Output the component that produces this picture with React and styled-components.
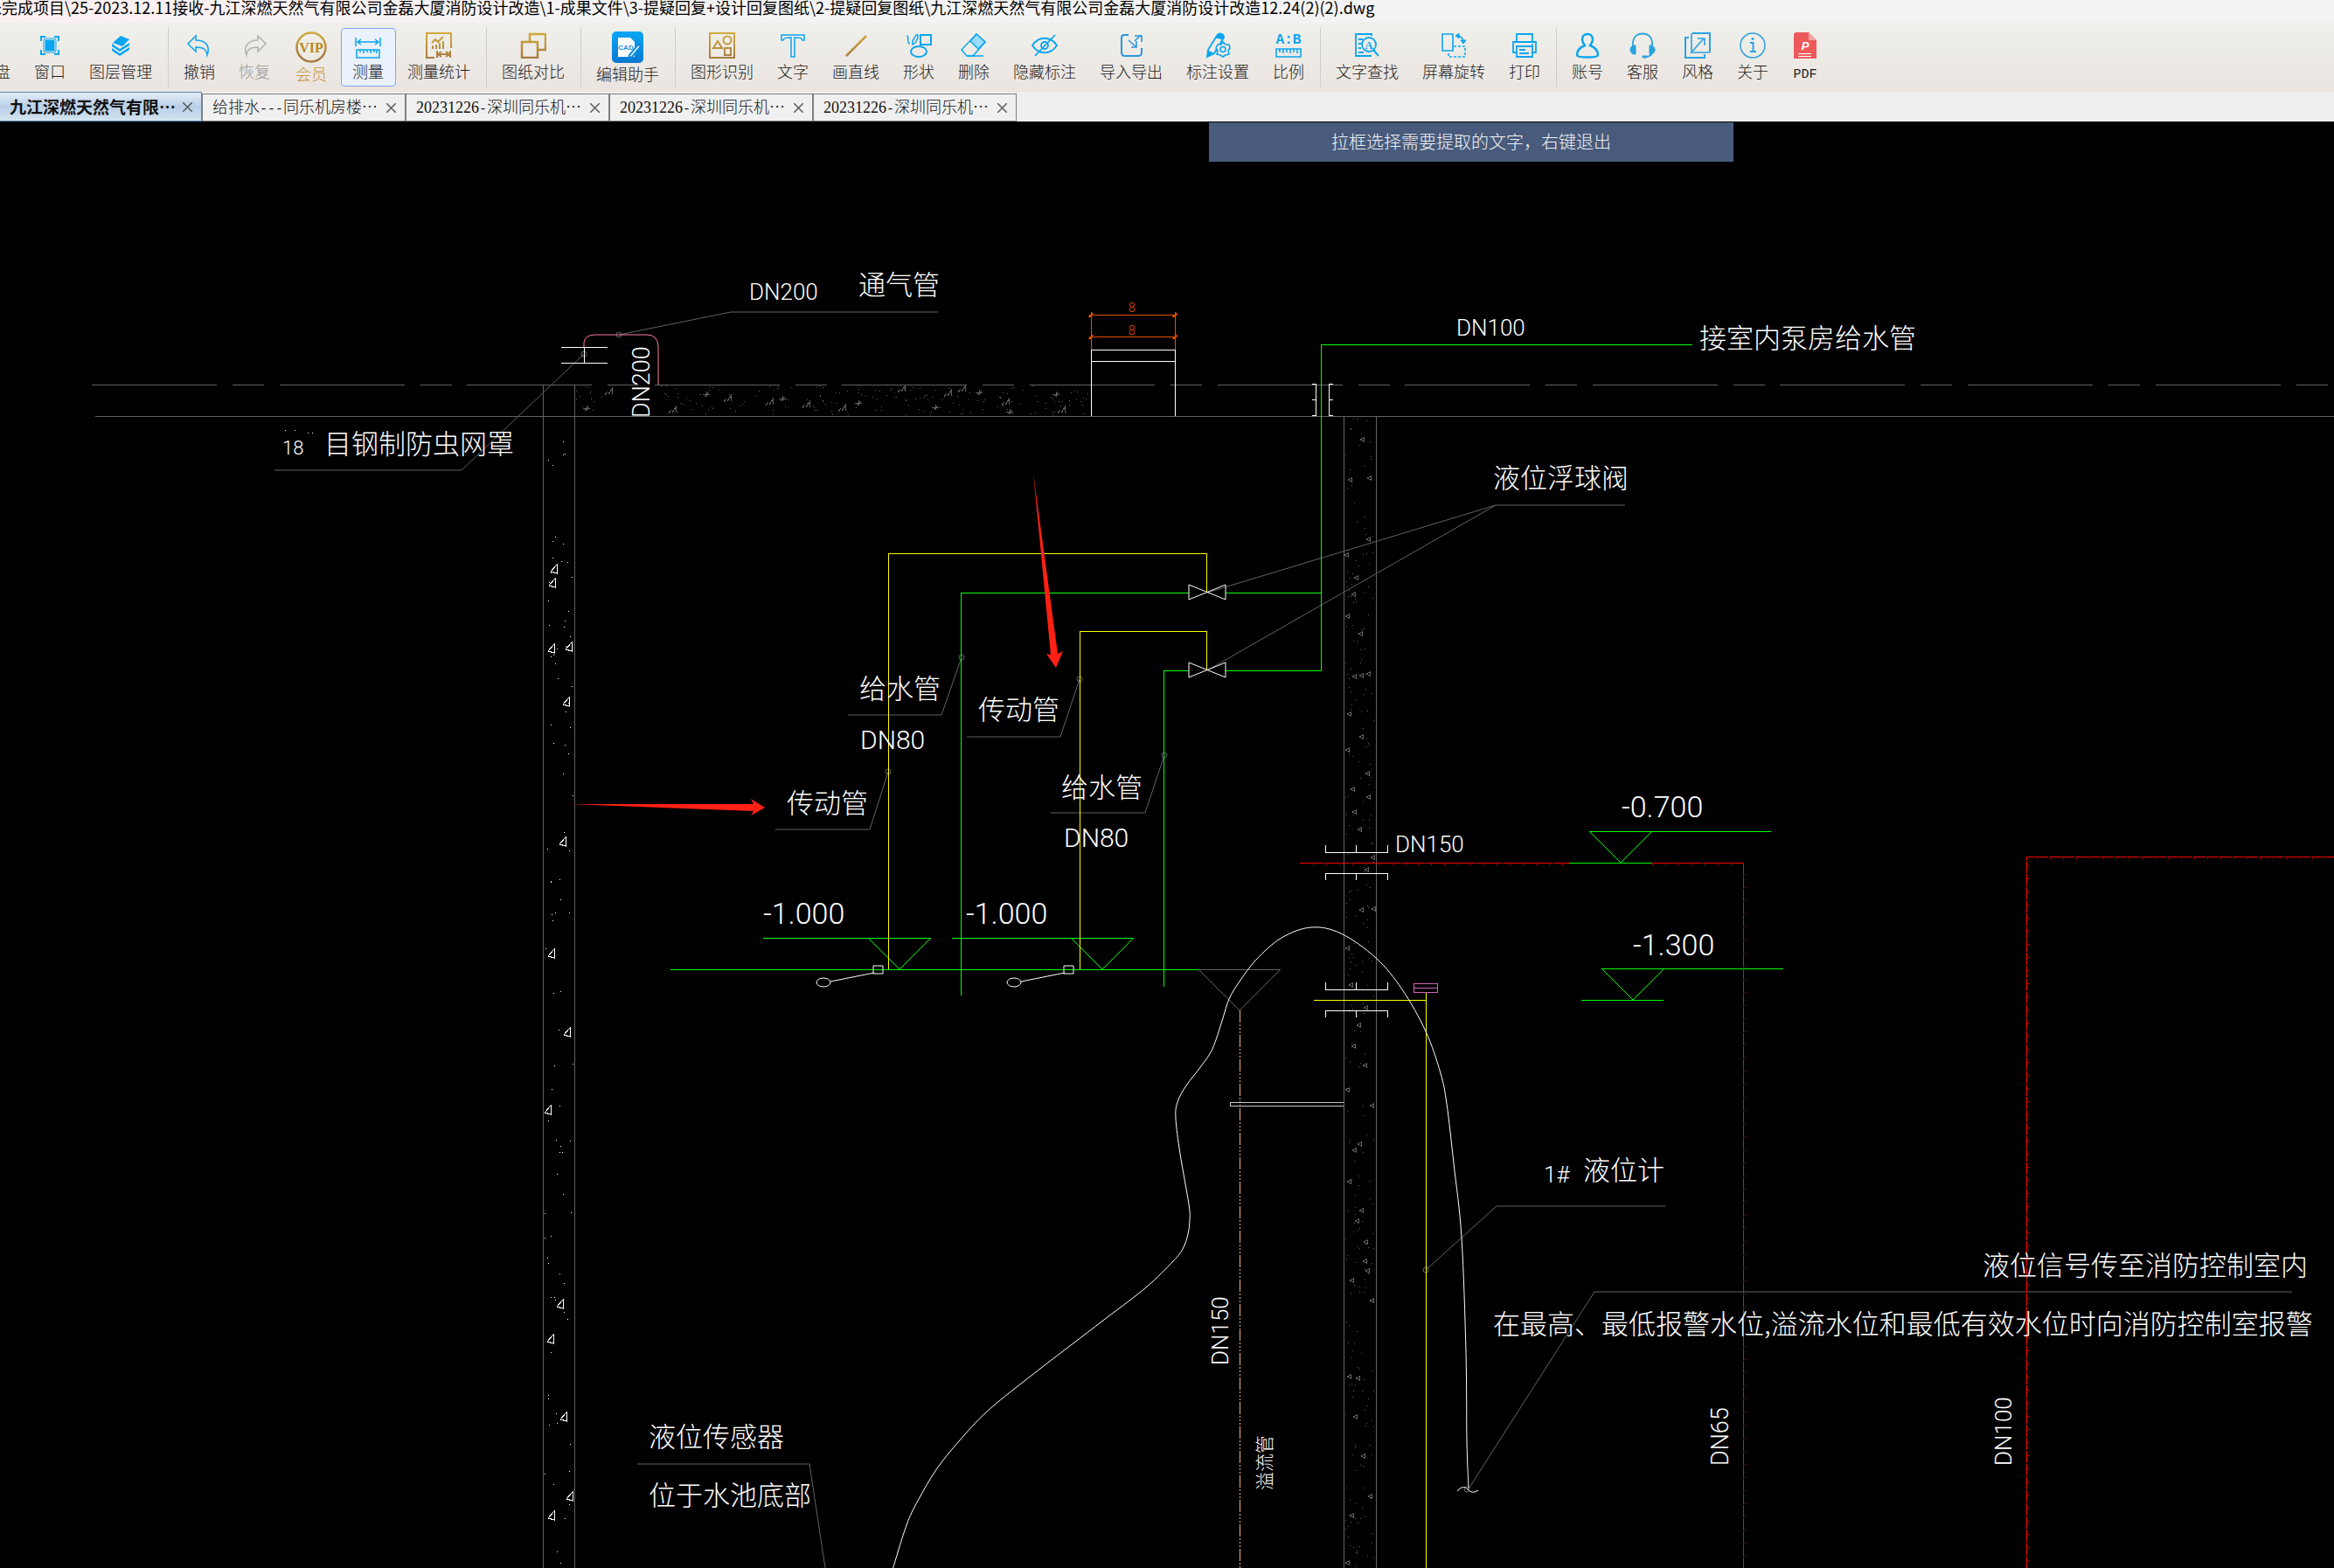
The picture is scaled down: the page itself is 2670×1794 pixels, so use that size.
import React from 'react';
import styled, { createGlobalStyle, css } from 'styled-components';

const BLUE = '#0aa5f0';
const GOLD = 'url(#gold)';
const GRAY = '#626262';

const GlobalStyle = createGlobalStyle`
  * {
    box-sizing: border-box;
  }

  body {
    margin: 0;
    background: #000000;
    overflow-x: hidden;
    font-family: 'Noto Sans CJK SC', sans-serif;
  }
`;

const Window = styled.div`
  display: flex;
  flex-direction: column;
`;

const TitleBar = styled.header`
  display: flex;
  align-items: center;
  height: 26px;
  padding-bottom: 10px;
  overflow: hidden;
  background: linear-gradient(90deg, #fbeff0 0%, #f3f3f3 30%, #f3f3f3 100%);
`;

const FilePath = styled.span`
  margin-left: -16px;
  font-size: 18px;
  line-height: 24px;
  color: #000000;
  white-space: nowrap;
`;

const Toolbar = styled.nav`
  display: flex;
  align-items: center;
  height: 79px;
  overflow: hidden;
  background: linear-gradient(180deg, #eff0eb 0%, #ebe4e0 100%);
`;

const ToolGroup = styled.div`
  display: flex;

  &:first-child {
    margin-left: -37px;
  }
`;

const Divider = styled.div`
  flex: none;
  width: 1px;
  height: 69px;
  margin: 0 4px;
  background: #d0cdca;
`;

const ToolButton = styled.button`
  display: flex;
  flex-direction: column;
  align-items: center;
  gap: ${(p) => (p.$large ? 0 : 2)}px;
  height: 67px;
  padding: ${(p) => (p.$large ? 3 : 4)}px ${(p) => (p.$wide ? 15 : 13)}px 0 ${(p) => (p.$wide ? 14 : 12)}px;
  border: 1px solid transparent;
  border-radius: 4px;
  background: transparent;
  color: ${(p) => p.$color || '#1c1c1c'};
  font-family: inherit;
  font-size: 18px;
  font-weight: 300;
  line-height: 24px;
  white-space: nowrap;
  cursor: pointer;

  ${(p) =>
    p.$active &&
    css`
      border-color: #7ba7f5;
      background: #eaf2fe;
    `}
`;

const IconBox = styled.svg`
  display: block;
  flex: none;
  width: ${(p) => (p.$large ? 36 : 30)}px;
  height: ${(p) => (p.$large ? 36 : 30)}px;
  fill: none;
  stroke: ${BLUE};
  stroke-width: 2;
`;

const Defs = styled.svg`
  position: absolute;
  width: 0;
  height: 0;
`;

const Latin = styled.span`
  font-family: 'Liberation Mono', monospace;
  font-size: 15px;
`;

const Digits = styled.span`
  font-family: 'Liberation Serif', serif;
`;

const TabBar = styled.div`
  display: flex;
  align-items: flex-end;
  height: 34px;
  background: #efefef;
`;

const Tab = styled.div`
  display: flex;
  align-items: center;
  justify-content: space-between;
  width: 233px;
  height: 32px;
  padding: 0 10px 0 11px;
  border: 1px solid #808080;
  background: #f0f0f0;
  color: #111111;
  font-size: 18px;
  font-weight: 300;
  white-space: nowrap;

  ${(p) =>
    p.$active &&
    css`
      width: 231px;
      height: 34px;
      border-color: #5b86bd;
      border-left: 0;
      background: linear-gradient(180deg, #e4edf7 0%, #b8cfe8 50%, #d3e4ef 100%);
      font-size: 19px;
      font-weight: 700;
    `}
`;

const TabName = styled.button`
  padding: 0;
  border: 0;
  background: none;
  color: inherit;
  font: inherit;
  line-height: 28px;
`;

const CloseButton = styled.button`
  display: flex;
  padding: 0;
  border: 0;
  background: none;
`;

const Workspace = styled.main`
  position: relative;
  background: #000000;
`;

const Hint = styled.div`
  position: absolute;
  top: 1px;
  left: 1383px;
  width: 600px;
  padding-bottom: 2px;
  background: #485b7d;
  color: #f2f2f2;
  font-size: 20px;
  font-weight: 300;
  line-height: 43px;
  text-align: center;
`;

const Sheet = styled.svg`
  display: block;
  width: 100%;
  height: auto;
  fill: none;
  stroke-width: 1;
`;

const Note = styled.text`
  fill: ${(p) => p.$color || '#ffffff'};
  stroke: none;
  font-family: 'Noto Sans CJK SC', sans-serif;
  font-size: ${(p) => p.$size || 31}px;
  font-weight: 300;
`;

const Figure = styled(Note)`
  font-family: Roboto, sans-serif;
`;

const icons = {
  window: (
    <>
      <path d="M5 10V5h5M20 5h5v5M25 20v5h-5M10 25H5v-5" />
      <rect x="8" y="7" width="14" height="16" rx="2" strokeWidth="1" />
      <rect x="10.500" y="9.500" width="9" height="11" fill={BLUE} />
    </>
  ),
  layers: (
    <g fill={BLUE} stroke="none">
      <path d="M15 4l10 4-8 8-11-4z" />
      <path d="M5 13l9 6 11-7v3l-11 7-9-6z" />
      <path d="M5 18l9 6 11-7v3l-11 7-9-6z" />
    </g>
  ),
  undo: <path d="M11 4L2 13l9 9v-5c8 0 12 2 13 9 4-10-2-17-13-17z" strokeWidth="1.500" />,
  redo: <path d="M19 4l9 9-9 9v-5c-8 0-12 2-13 9-4-10 2-17 13-17z" stroke="#b0b0b0" strokeWidth="1.500" />,
  vip: (
    <>
      <circle cx="18" cy="18" r="16.500" stroke={GOLD} strokeWidth="2.500" />
      <text x="18" y="24" fill="#b98a1c" stroke="none" fontFamily="Liberation Serif" fontWeight="700" fontSize="16" textAnchor="middle">
        VIP
      </text>
    </>
  ),
  measure: (
    <>
      <path d="M1 6v10M29 6v10M3 11h24M7 8l-4 3 4 3M23 8l4 3-4 3" strokeWidth="1.500" />
      <path d="M2 20h26v9H2zM6 20v3M10 20v4M14 20v3M18 20v4M22 20v3M25 20v4" strokeWidth="1.500" />
    </>
  ),
  stats: (
    <g stroke={GOLD}>
      <path d="M10 29H1V1h28v17" />
      <path d="M7 12l4-4 3 3 6-6M8 19v-4M12 19v-5M16 19v-7M20 19v-9" />
      <path d="M13 21v8M28 21v8M14 25h13M18 22l-4 3 4 3M23 22l4 3-4 3" />
    </g>
  ),
  compare: (
    <g stroke={GOLD} strokeWidth="2.500">
      <path d="M11 10V2h18v18h-8" />
      <path d="M2 11h18v18H2z" />
    </g>
  ),
  editor: (
    <>
      <rect width="36" height="36" rx="5" fill="url(#editor)" stroke="none" />
      <path d="M7 7h14l5 5v17H7z" fill="#ffffff" stroke="none" />
      <path d="M33 17L23 29l-4 2 1-4 10-12z" fill="#ffffff" stroke="#0a8be0" />
      <text x="16" y="21" fill="#0a90e6" stroke="none" fontFamily="Liberation Sans" fontWeight="700" fontSize="8" textAnchor="middle">
        CAD
      </text>
    </>
  ),
  shapesFound: (
    <g stroke={GOLD}>
      <path d="M1 1h28v28H1zM10 10l-5 8h10zM18 18h7v8h-7z" />
      <circle cx="21" cy="9" r="4.500" />
    </g>
  ),
  text: <path d="M2 3h26v6h-2c-1-3-4-3-9-3v22h-4V6C8 6 5 6 4 9H2z" strokeWidth="1.500" />,
  line: <path d="M27 4L4 27" stroke={GOLD} strokeWidth="2.500" />,
  shapes: (
    <>
      <path d="M17 3h12v11H17z" />
      <ellipse cx="15" cy="22" rx="9" ry="6" />
      <path d="M1 4c4 0-1 8 4 9M12 3l-4 7v4l3-2 3-6V3z" strokeWidth="1.500" />
    </>
  ),
  eraser: (
    <>
      <path d="M18 2l10 9-14 16H7l-6-7z" strokeWidth="1.500" />
      <path d="M18 2l10 9-8 8-9-9z" fill="#9bdcfb" strokeWidth="1.500" />
      <path d="M8 27h18" strokeWidth="1.500" />
    </>
  ),
  hidden: (
    <>
      <path d="M1 15C8 4 22 4 29 15 22 26 8 26 1 15z" strokeWidth="1.800" />
      <circle cx="15" cy="15" r="4" strokeWidth="1.800" />
      <path d="M27 3L4 27" strokeWidth="1.800" />
    </>
  ),
  transfer: (
    <g stroke="#2a97d8">
      <path d="M12 3H7c-2 0-3 1-3 3v17c0 3 1 4 4 4h15c3 0 4-1 4-4v-5" />
      <path d="M12 9l9 8M21 10v7h-6M26 3l-7 7M19 4h8v7" strokeWidth="1.600" />
    </g>
  ),
  noteSettings: (
    <>
      <path d="M14 4c2-4 8-3 8 2L11 24l-8 4 1-8z" strokeWidth="1.800" />
      <path d="M14 4c2-4 8-3 8 2l-1 2-8-2zM4 21l6 3-7 4z" fill={BLUE} strokeWidth="1" />
      <path d="M21 11l3 3 4 0 1 4-2 3 1 4-4 1-3 2-3-2-4-1 1-4-2-3 2-4 4 0z" fill="#edeae6" strokeWidth="1.600" />
      <circle cx="21" cy="19.500" r="3" strokeWidth="1.600" />
    </>
  ),
  scale: (
    <>
      <text x="15" y="13" fill={BLUE} stroke="none" fontFamily="Liberation Mono" fontWeight="700" fontSize="16" textAnchor="middle">
        A:B
      </text>
      <path d="M1 19h28v9H1zM5 19v4M9 19v5M13 19v4M17 19v5M21 19v4M25 19v5" strokeWidth="1.600" />
    </>
  ),
  find: (
    <>
      <path d="M20 4V2H2v25h18M5 8h5M5 13h3M5 18h3M5 23h6" strokeWidth="1.800" />
      <circle cx="17" cy="14" r="8" strokeWidth="1.800" />
      <path d="M22 20l6 7" />
      <text x="17" y="19" fill={BLUE} stroke="none" fontFamily="Liberation Serif" fontWeight="700" fontSize="13" textAnchor="middle">
        A
      </text>
    </>
  ),
  rotate: (
    <>
      <path d="M2 2h12v19H2z" strokeWidth="1.600" />
      <path d="M15 16h13v12H9v-6" strokeWidth="1.600" strokeDasharray="3 2" />
      <path d="M19 4c4 0 7 3 7 7" strokeWidth="1.600" />
      <path d="M21 1v6l-4-3zM23 9h6l-3 4z" fill={BLUE} strokeWidth="1" />
    </>
  ),
  print: (
    <>
      <path d="M6 11V2h18v9M6 23H2V11h26v12h-4M6 16h18v12H6zM9 20h7M9 24h11" strokeWidth="1.800" />
      <circle cx="24" cy="14" r="1" fill={BLUE} strokeWidth="0" />
    </>
  ),
  account: (
    <path d="M15 2c4 0 6 3 6 6 0 4-2 5-3 7 5 2 9 5 9 11 0 2-5 2.500-12 2.500S3 28 3 26c0-6 4-9 9-11-1-2-3-3-3-7 0-3 2-6 6-6z" strokeWidth="2.500" />
  ),
  service: (
    <g stroke="#2aa3e0">
      <path d="M4 16C3 6 8 1.500 15 1.500S27 6 26 16M26 22c0 4-3 6-8 6" strokeWidth="1.800" />
      <path d="M7 15v10c-8 1-8-11 0-10zM23 15v10c8 1 8-11 0-10zM15 27h5v2h-5z" fill="#2aa3e0" strokeWidth="1" />
    </g>
  ),
  style: (
    <g stroke="#2aa3e0">
      <path d="M9 1h20v22M5 6H1v23h22v-4" />
      <path d="M8 1v22h21M7 24L22 7M15 7h8v8" strokeWidth="1.600" />
    </g>
  ),
  about: (
    <g stroke="#2aa3e0">
      <circle cx="15" cy="15" r="14" strokeWidth="1.500" />
      <path d="M12 12h3.500v10M12 22h7" />
      <circle cx="15" cy="7.500" r="1.500" fill="#2aa3e0" strokeWidth="0" />
    </g>
  ),
  pdf: (
    <g stroke="none">
      <path d="M4 0h15l9 9v21H2V2z" fill="#ec5a5c" />
      <path d="M19 0l9 9h-9z" fill="#f6a3a4" />
      <path d="M7 24h15v1H7zM7 27h15v1H7z" fill="#ffffff" />
      <text x="15" y="20" fill="#ffffff" fontFamily="Liberation Sans" fontWeight="700" fontStyle="italic" fontSize="13" textAnchor="middle">
        P
      </text>
    </g>
  ),
};

const toolGroups = [
  [
    { label: '云盘' },
    { label: '窗口', icon: 'window' },
    { label: '图层管理', icon: 'layers' },
  ],
  [
    { label: '撤销', icon: 'undo' },
    { label: '恢复', icon: 'redo', color: '#9a9a9a' },
    { label: '会员', icon: 'vip', color: '#c4953f', large: true, wide: true },
    { label: '测量', icon: 'measure', active: true },
    { label: '测量统计', icon: 'stats' },
  ],
  [{ label: '图纸对比', icon: 'compare' }],
  [{ label: '编辑助手', icon: 'editor', large: true }],
  [
    { label: '图形识别', icon: 'shapesFound' },
    { label: '文字', icon: 'text' },
    { label: '画直线', icon: 'line' },
    { label: '形状', icon: 'shapes' },
    { label: '删除', icon: 'eraser' },
    { label: '隐藏标注', icon: 'hidden' },
    { label: '导入导出', icon: 'transfer' },
    { label: '标注设置', icon: 'noteSettings' },
    { label: '比例', icon: 'scale' },
  ],
  [
    { label: '文字查找', icon: 'find' },
    { label: '屏幕旋转', icon: 'rotate' },
    { label: '打印', icon: 'print' },
  ],
  [
    { label: '账号', icon: 'account' },
    { label: '客服', icon: 'service' },
    { label: '风格', icon: 'style' },
    { label: '关于', icon: 'about' },
    { label: 'PDF', icon: 'pdf' },
  ],
];

const tabs = [
  '九江深燃天然气有限⋯',
  '给排水---同乐机房楼⋯',
  '20231226-深圳同乐机⋯',
  '20231226-深圳同乐机⋯',
  '20231226-深圳同乐机⋯',
];

// ASCII runs take half the width of a Chinese character
const Mixed = ({ children }) =>
  children.split(/(\d+|[A-Za-z-]+)/).map((part, i) => {
    if (i % 2 === 0) return part;
    return /\d/.test(part) ? <Digits key={i}>{part}</Digits> : <Latin key={i}>{part}</Latin>;
  });

const notes = [
  [982, 337, '通气管'],
  [371, 519, '目钢制防虫网罩'],
  [1944, 398, '接室内泵房给水管'],
  [1708, 558, '液位浮球阀'],
  [983, 799, '给水管'],
  [1119, 823, '传动管'],
  [900, 930, '传动管'],
  [1214, 912, '给水管'],
  [1811, 1350, '液位计'],
  [2268, 1459, '液位信号传至消防控制室内'],
  [1708, 1526, '在最高、最低报警水位,溢流水位和最低有效水位时向消防控制室报警'],
  [742, 1655, '液位传感器'],
  [742, 1722, '位于水池底部'],
];

const figures = [
  [857, 343, 26, 'DN200'],
  [1666, 384, 26, 'DN100'],
  [1596, 975, 26, 'DN150'],
  [984, 857, 30, 'DN80'],
  [1217, 969, 30, 'DN80'],
  [873, 1057, 34, '-1.000'],
  [1105, 1057, 34, '-1.000'],
  [1855, 935, 34, '-0.700'],
  [1868, 1093, 34, '-1.300'],
  [323, 520, 22, '18'],
  [1766, 1353, 26, '1#'],
];

const uprightFigures = [
  [743, 478, 27, 'DN200'],
  [1405, 1562, 26, 'DN150'],
  [1977, 1677, 27, 'DN65'],
  [2301, 1677, 26, 'DN100'],
];

const outline = [
  [1680, 1703], [1678, 1649], [1677, 1548], [1672, 1416], [1663, 1331], [1655, 1263],
  [1648, 1228], [1631, 1180], [1604, 1132], [1574, 1096], [1534, 1068], [1500, 1061],
  [1466, 1073], [1437, 1098], [1418, 1123], [1406, 1143], [1398, 1168], [1387, 1200],
  [1374, 1220], [1357, 1242], [1347, 1261], [1345, 1280], [1350, 1320], [1360, 1378],
  [1361, 1395], [1359, 1412], [1353, 1429], [1342, 1443], [1311, 1473], [1263, 1510],
  [1177, 1576], [1129, 1615], [1097, 1649], [1072, 1680], [1050, 1717], [1037, 1745],
  [1021, 1796],
];

const gravelLeft = [
  [635, 651], [633, 667], [632, 742], [652, 740], [649, 803], [645, 963], [632, 1091],
  [650, 1181], [628, 1270], [642, 1492], [631, 1532], [646, 1621], [653, 1712], [632, 1734],
];

const gravelRight = [
  [1558, 503], [1544, 549], [1566, 547], [1565, 617], [1540, 635], [1551, 661], [1548, 680],
  [1541, 705], [1556, 725], [1549, 774], [1557, 773], [1565, 771], [1543, 817], [1557, 843],
  [1541, 858], [1564, 885], [1547, 903], [1565, 912], [1549, 929], [1555, 949], [1563, 995],
  [1570, 981], [1557, 1041], [1571, 1040], [1541, 1085], [1545, 1127], [1562, 1153],
  [1554, 1173], [1548, 1197], [1561, 1219], [1541, 1247], [1569, 1265], [1549, 1316],
  [1555, 1309], [1543, 1352], [1557, 1385], [1552, 1397], [1562, 1421], [1561, 1443],
  [1564, 1454], [1546, 1465], [1569, 1488], [1543, 1575], [1553, 1577], [1550, 1621],
  [1559, 1666], [1567, 1712], [1546, 1734], [1541, 1788],
];

const gravelSlab = [
  [671, 467], [808, 451], [895, 456], [982, 461], [1070, 466], [1120, 449], [1208, 451],
  [1155, 471],
];

const chipsSlab = [
  [769, 470], [922, 464], [963, 468], [1031, 446], [1084, 451], [1150, 461], [1214, 470],
  [696, 449], [832, 457], [880, 461], [1100, 446],
];

function smooth(points) {
  let d = `M${points[0]}`;
  for (let i = 0; i < points.length - 1; i++) {
    const a = points[i - 1] || points[i];
    const b = points[i];
    const c = points[i + 1];
    const e = points[i + 2] || c;
    d += `C${b[0] + (c[0] - a[0]) / 6} ${b[1] + (c[1] - a[1]) / 6} ${c[0] - (e[0] - b[0]) / 6} ${c[1] - (e[1] - b[1]) / 6} ${c[0]} ${c[1]}`;
  }
  return d;
}

// repeatable sand dots for the concrete hatch
function sand(x, y, w, h, count, seed) {
  let n = seed;
  const next = () => {
    n = (n * 16807) % 2147483647;
    return n / 2147483647;
  };
  let d = '';
  for (let i = 0; i < count; i++) {
    d += `M${Math.floor(x + next() * w)} ${Math.floor(y + next() * h)}h1`;
  }
  return d;
}

const Gravel = ({ points, r }) => (
  <path d={points.map(([x, y]) => `M${x - r} ${y + r - 2}l${r + 2} ${-2 * r + 2}v${2 * r}z`).join('')} />
);

const Valve = ({ y }) => <path d={`M1360 ${y - 9}v17l42 -17v17z`} />;

const Level = ({ x1, x2, left, y }) => <path d={`M${x1} ${y}H${x2}M${left} ${y}l36 36 36 -36`} />;

const Float = ({ x }) => (
  <>
    <ellipse cx={x} cy="1124" rx="8" ry="5" />
    <path d={`M${x + 8} 1123l50 -10M${x + 57} 1105h11v9h-11z`} />
  </>
);

const Sleeve = ({ y }) => (
  <path d={`M1516 ${y - 8}v8h71v-8M1551 ${y - 8}v8M1516 ${y + 32}v-8h71v8M1551 ${y + 32}v-8`} />
);

const Drawing = () => (
  <Sheet viewBox="0 139 2670 1655">
    <g stroke={GRAY} shapeRendering="crispEdges">
      <path d="M105 440H2670" strokeDasharray="143 18 36 17.600" />
      <path d="M109 476H2670M621 440V1794M657 440V1794M1537 476V1794M1574 476V1794" />
      <path d="M1371 1109H1465L1418 1156z" />
      <path d={sand(659, 441, 34, 34, 14, 11)} />
      <path d={sand(756, 441, 490, 34, 170, 23)} />
      <path d={sand(1539, 478, 33, 1316, 260, 37)} />
      <Gravel points={gravelRight} r={2} />
      <path d={gravelSlab.map(([x, y]) => `M${x - 4} ${y}h8M${x} ${y - 3}v6M${x - 2} ${y + 3}l5 -5`).join('')} />
      <path d={chipsSlab.map(([x, y]) => `M${x - 4} ${y + 3}l3 -4M${x} ${y + 2}l4 -6v6`).join('')} />
    </g>
    <g stroke="#ffffff" shapeRendering="crispEdges">
      <path d={sand(623, 500, 33, 1294, 90, 51)} />
      <Gravel points={gravelLeft} r={5} />
    </g>
    <g stroke={GRAY}>
      <path d="M668 405L528 538H314M708 383L836 357H1073" />
      <path d="M1381 678L1711 578H1859M1381 767L1711 578" />
      <path d="M970 818H1077L1100 752M1106 843H1213L1235 777M887 949H995L1016 883M1202 930H1310L1332 864" />
      <path d="M1905 1380H1712L1631 1453M2622 1478H1824L1679 1705M729 1675H926L944 1794" />
      {[[668, 405], [708, 383], [1100, 752], [1235, 777], [1016, 883], [1332, 864], [1631, 1453], [1678, 1704]].map(([x, y]) => (
        <circle key={x} cx={x} cy={y} r="3" />
      ))}
    </g>
    <g stroke="#00ff00" shapeRendering="crispEdges">
      <path d="M1936 394H1511V767H1402M1402 678H1511M1360 678H1099V1139M1360 767H1331V1129M767 1109H1371" />
      <path d="M1795 987H1890M1809 1144H1903" />
      <Level x1={873} x2={1065} left={993} y={1073} />
      <Level x1={1089} x2={1297} left={1225} y={1073} />
      <Level x1={1818} x2={2026} left={1818} y={951} />
      <Level x1={1832} x2={2040} left={1832} y={1108} />
    </g>
    <g stroke="#ffff00" shapeRendering="crispEdges">
      <path d="M1016 1109V633H1380V678M1235 1109V722H1380V767M1503 1144H1631M1631 1135V1794" />
    </g>
    <g stroke="#ff0000" shapeRendering="crispEdges">
      <path d="M1487 987H1795M1890 987H1994" strokeDasharray="28 1" />
      <path d="M1994 987V1794M2318 1794V980H2670" strokeDasharray="14 1" />
      <path d="M1502 989H1795M1890 989H1994M1996 1000V1794M2320 990V1794M2330 982H2670" strokeDasharray="1 14" />
    </g>
    <path d="M668 398V392Q669 383 681 383H740Q752 383 753 396V440" stroke="#ff7f9f" />
    <path d="M1617 1125H1644V1135H1617zM1617 1130H1644" stroke="#cc66bb" shapeRendering="crispEdges" />
    <path d="M1418 1156V1794" stroke="#f0b080" strokeDasharray="14 2 2 2 2 2 2 2" shapeRendering="crispEdges" />
    <path d="M1537 1261H1407V1265H1537" stroke="#c4c4c4" shapeRendering="crispEdges" />
    <g stroke="#e65000" shapeRendering="crispEdges">
      <path d="M1248 357V400M1344 357V400M1246 360H1347M1246 385H1347" />
      <path d="M1246 363l4 -5M1342 363l4 -5M1246 388l4 -5M1342 388l4 -5" strokeWidth="2" />
    </g>
    <g stroke="#ffffff" shapeRendering="crispEdges">
      <path d="M642 397H695M642 415H695M668 397V415" />
      <path d="M1248 476V400H1344V476M1248 413H1344" />
      <path d="M1501 439H1505V475H1501M1501 457H1505M1525 439H1520V475H1525M1520 457H1525" />
      <Sleeve y={975} />
      <Sleeve y={1132} />
      <path d="M326 492h1M337 492h1M352 495h1M357 495h1" />
    </g>
    <g stroke="#ffffff">
      <Valve y={678} />
      <Valve y={767} />
      <Float x={942} />
      <Float x={1160} />
      <path d={smooth(outline)} />
      <path d="M1667 1706q7 -8 12 -2t12 1" />
    </g>
    <g fill="#ff2014">
      <path d="M1182 541L1210 748L1216 745L1208 764L1197 748L1202 749z" />
      <path d="M652 920L862 920L859 914L875 924L859 933L862 928z" />
    </g>
    {notes.map(([x, y, text]) => (
      <Note key={`${x}-${y}`} x={x} y={y}>
        {text}
      </Note>
    ))}
    <Note $size={21} transform="translate(1454 1705) rotate(-90)">
      溢流管
    </Note>
    {figures.map(([x, y, size, text]) => (
      <Figure key={`${x}-${y}`} x={x} y={y} $size={size}>
        {text}
      </Figure>
    ))}
    {uprightFigures.map(([x, y, size, text]) => (
      <Figure key={x} $size={size} transform={`translate(${x} ${y}) rotate(-90)`}>
        {text}
      </Figure>
    ))}
    <Figure x="1291" y="357" $size={14} $color="#e65000">8</Figure>
    <Figure x="1291" y="383" $size={14} $color="#e65000">8</Figure>
  </Sheet>
);

const Tool = ({ label, icon, color, active, large, wide }) => (
  <ToolButton $color={color} $active={active} $large={large} $wide={wide} aria-pressed={active}>
    <IconBox $large={large} viewBox={large ? '0 0 36 36' : '0 0 30 30'} aria-hidden="true">
      {icons[icon]}
    </IconBox>
    <span>
      <Mixed>{label}</Mixed>
    </span>
  </ToolButton>
);

const App = () => (
  <Window>
    <GlobalStyle />
    <Defs aria-hidden="true">
      <linearGradient id="gold" gradientUnits="userSpaceOnUse" x1="0" y1="0" x2="0" y2="30">
        <stop offset="0" stopColor="#d4ab3c" />
        <stop offset="1" stopColor="#a67c42" />
      </linearGradient>
      <linearGradient id="editor" x1="0" y1="0" x2="0" y2="1">
        <stop offset="0" stopColor="#0aa6f5" />
        <stop offset="1" stopColor="#0878d0" />
      </linearGradient>
    </Defs>
    <TitleBar>
      <FilePath>
        未完成项目\25-2023.12.11接收-九江深燃天然气有限公司金磊大厦消防设计改造\1-成果文件\3-提疑回复+设计回复图纸\2-提疑回复图纸\九江深燃天然气有限公司金磊大厦消防设计改造12.24(2)(2).dwg
      </FilePath>
    </TitleBar>
    <Toolbar>
      {toolGroups.map((group, i) => (
        <React.Fragment key={i}>
          {i > 0 && <Divider />}
          <ToolGroup>
            {group.map((tool) => (
              <Tool key={tool.label} {...tool} />
            ))}
          </ToolGroup>
        </React.Fragment>
      ))}
    </Toolbar>
    <TabBar>
      {tabs.map((name, i) => (
        <Tab key={i} $active={i === 0}>
          <TabName>
            <Mixed>{name}</Mixed>
          </TabName>
          <CloseButton aria-label="关闭">
            <svg width="11" height="11" stroke="#5c5c5c" strokeWidth="1.500">
              <path d="M0 0l11 11M11 0L0 11" />
            </svg>
          </CloseButton>
        </Tab>
      ))}
    </TabBar>
    <Workspace>
      <Drawing />
      <Hint>拉框选择需要提取的文字，右键退出</Hint>
    </Workspace>
  </Window>
);

export default App;
